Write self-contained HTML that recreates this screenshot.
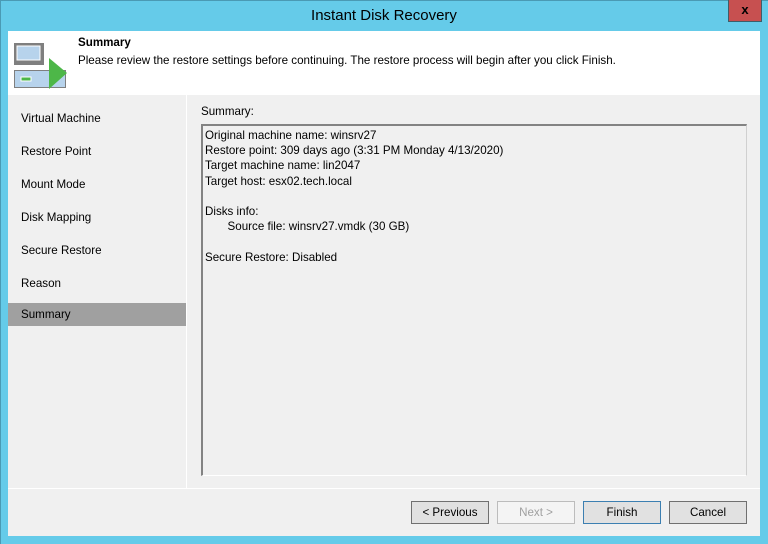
<!DOCTYPE html>
<html><head><style>
*{margin:0;padding:0;box-sizing:border-box}
body{width:768px;height:544px;background:#65cbe9;font-family:"Liberation Sans",sans-serif;font-size:11.6px;color:#000;position:relative;overflow:hidden}
.frame{position:absolute;left:0;top:0;width:768px;height:544px;border:1px solid #4a9ab4;border-bottom:none;border-right:none}
.title{position:absolute;top:7px;left:0;width:768px;text-align:center;font-size:15px;color:#000}
.close{position:absolute;left:728px;top:0;width:34px;height:22px;background:#c75050;border:1px solid #3d5e6a;border-top:none;text-align:center;font-weight:bold;font-size:13px;line-height:20px}
.client{position:absolute;left:8px;top:31px;width:752px;height:505px;background:#f0f0f0}
.head{position:absolute;left:0;top:0;width:752px;height:64px;background:#fff}
.nav{position:absolute;left:0;top:64px;width:179px;height:393px;background:#f0f0f0;border-right:1px solid #fff}
.nav div{height:33px;line-height:33px;padding-left:13px}
.nav .sel{background:#a0a0a0;height:23px;line-height:23px;margin-top:3px}
.lbl{position:absolute;left:193px;top:74px}
.box{position:absolute;left:193px;top:93px;width:546px;height:352px;border:2px solid #838383;border-right:1px solid #d0d0d0;border-bottom:1px solid #fff;padding:2px 0 0 2px;line-height:15.2px}
.sep{position:absolute;left:0;top:457px;width:752px;border-top:1px solid #fff}
.btn{position:absolute;top:470px;width:78px;height:23px;border:1px solid #707070;background:#e1e1e1;text-align:center;line-height:21px}
</style></head><body>
<div class="frame"></div>
<div class="title">Instant Disk Recovery</div>
<div class="close">x</div>
<div class="client">
 <div class="head">
  <svg style="position:absolute;left:0;top:0" width="70" height="64">
   <rect x="6" y="12" width="30" height="22" fill="#7f7f7f"/>
   <rect x="9" y="15" width="23" height="14" fill="#b7d3ec" stroke="#fff" stroke-width="1"/>
   <rect x="6.5" y="39.5" width="51" height="17" fill="#b7d3ec" stroke="#7f7f7f"/>
   <rect x="13" y="46" width="10" height="4" fill="#4db748" stroke="#fff"/>
   <polygon points="41,27 59,42 41,58" fill="#4db748"/>
  </svg>
  <div style="position:absolute;left:70px;top:5px;font-weight:bold">Summary</div>
  <div style="position:absolute;left:70px;top:23px">Please review the restore settings before continuing. The restore process will begin after you click Finish.</div>
 </div>
 <div class="nav" style="padding-top:7px">
  <div>Virtual Machine</div><div>Restore Point</div><div>Mount Mode</div><div>Disk Mapping</div><div>Secure Restore</div><div>Reason</div><div class="sel">Summary</div>
 </div>
 <div class="lbl">Summary:</div>
 <div class="box">Original machine name: winsrv27<br>Restore point: 309 days ago (3:31 PM Monday 4/13/2020)<br>Target machine name: lin2047<br>Target host: esx02.tech.local<br><br>Disks info:<br>&nbsp;&nbsp;&nbsp;&nbsp;&nbsp;&nbsp;&nbsp;Source file: winsrv27.vmdk (30 GB)<br><br>Secure Restore: Disabled</div>
 <div class="sep"></div>
 <div class="btn" style="left:403px">&lt; Previous</div>
 <div class="btn" style="left:489px;border-color:#bcbcbc;background:#f4f4f4;color:#a0a0a0">Next &gt;</div>
 <div class="btn" style="left:575px;border-color:#3c7fb1">Finish</div>
 <div class="btn" style="left:661px">Cancel</div>
</div>
</body></html>
